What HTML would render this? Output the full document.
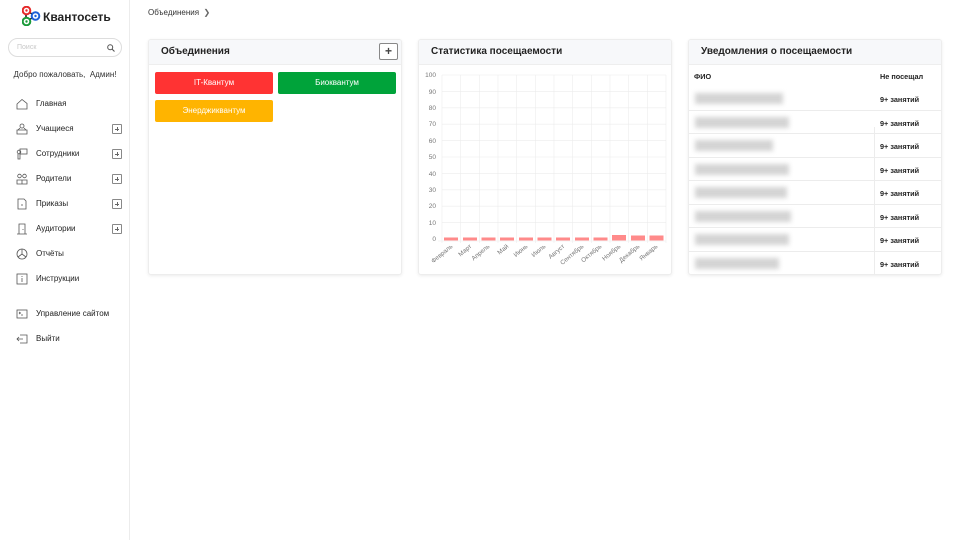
<!DOCTYPE html>
<html><head><meta charset="utf-8"><style>
*{box-sizing:border-box;margin:0;padding:0}
body{width:960px;height:540px;background:#fff;font-family:"Liberation Sans","Noto Sans CJK SC",sans-serif;color:#222;position:relative;overflow:hidden}
.sb{position:absolute;left:0;top:0;width:130px;height:540px;border-right:1px solid #ececec}
.logo{position:absolute;left:22px;top:6px}
.logo span{position:absolute;left:21px;top:4px;font-weight:bold;font-size:12px;white-space:nowrap}
.search{position:absolute;left:8px;top:38px;width:114px;height:19px;border:1px solid #ddd;border-radius:10px;font-size:7px;color:#c8c8c8;padding:5px 0 0 8px}
.welcome{position:absolute;left:0;width:130px;top:70px;text-align:center;font-size:8px;color:#333}
.it{position:absolute;left:16px;font-size:8px;color:#222;height:12px;line-height:12px}
.it svg{position:absolute;left:0;top:0}
.it span{position:absolute;left:20px;white-space:nowrap}
.pl{position:absolute;left:112px;width:10px;height:10px;border:1px solid #888;border-radius:1px}
.pl:before{content:"";position:absolute;left:2px;top:4px;width:4px;height:1px;background:#666}
.pl:after{content:"";position:absolute;left:4px;top:2px;width:1px;height:4px;background:#666}
.bc{position:absolute;left:148px;top:8px;font-size:8px;color:#333}
.card{position:absolute;top:39px;width:254px;height:236px;border:1px solid #ededed;border-radius:3px;box-shadow:0 1px 3px rgba(0,0,0,.08);background:#fff;overflow:hidden}
.hd{height:25px;background:#f7f8fa;border-bottom:1px solid #eee;font-weight:bold;font-size:10px;padding:6px 0 0 12px}
.btn{position:absolute;width:118px;height:22px;border-radius:2px;color:#fff;font-size:8px;text-align:center;line-height:22px}
.addb{position:absolute;right:3px;top:3px;width:19px;height:17px;border:1px solid #888;border-radius:2px;background:#fff;font-size:12px;text-align:center;line-height:14px;color:#444;font-weight:bold}
.row{position:absolute;left:0;width:254px;height:23.5px;border-bottom:1px solid #ececec}
.nm{position:absolute;left:6px;top:6px;height:11px;background:#d4d4d4;filter:blur(2.5px)}
.v{position:absolute;left:191px;top:8px;font-size:7.3px;font-weight:bold}
.vl{position:absolute;left:185px;top:87px;width:1px;height:148px;background:#ececec}
</style></head><body>
<div class="sb">
 <div class="logo">
  <svg width="20" height="20" viewBox="0 0 20 20"><line x1="4" y1="4" x2="13" y2="10" stroke="#111" stroke-width="1.5"/><line x1="4" y1="16" x2="13" y2="10" stroke="#111" stroke-width="1.5"/><line x1="4" y1="4" x2="4" y2="16" stroke="#111" stroke-width="1.5"/>
  <circle cx="4.5" cy="4.5" r="3.8" fill="#fff" stroke="#e52a2a" stroke-width="2"/><circle cx="4.5" cy="4.5" r="1.2" fill="#e52a2a"/>
  <circle cx="13.5" cy="10" r="3.8" fill="#fff" stroke="#1c60d8" stroke-width="2"/><circle cx="13.5" cy="10" r="1.2" fill="#1c60d8"/>
  <circle cx="4.5" cy="15.5" r="3.8" fill="#fff" stroke="#1a9a3a" stroke-width="2"/><circle cx="4.5" cy="15.5" r="1.2" fill="#1a9a3a"/></svg>
  <span>Квантосеть</span>
 </div>
 <div class="search">Поиск<svg style="position:absolute;right:6px;top:5px" width="8" height="8" viewBox="0 0 8 8"><circle cx="3.2" cy="3.2" r="2.5" fill="none" stroke="#555" stroke-width="1"/><line x1="5" y1="5" x2="7.5" y2="7.5" stroke="#555" stroke-width="1.1"/></svg></div>
 <div class="welcome">Добро пожаловать,&nbsp; Админ!</div>
 <div class="it" style="top:98px"><svg width="12" height="12" viewBox="0 0 12 12" fill="none" stroke="#555" stroke-width=".8"><path d="M1 6 6 1.5 11 5.5V11H1Z"/></svg><span>Главная</span></div>
 <div class="it" style="top:123px"><svg width="12" height="12" viewBox="0 0 12 12" fill="none" stroke="#555" stroke-width=".8"><circle cx="6" cy="3" r="2"/><path d="M1 7h10v4H1zM4 5l-2 2M8 5l2 2"/></svg><span>Учащиеся</span></div>
 <div class="pl" style="top:124px"></div>
 <div class="it" style="top:148px"><svg width="12" height="12" viewBox="0 0 12 12" fill="none" stroke="#555" stroke-width=".8"><rect x="4" y="1" width="7" height="5"/><circle cx="3" cy="4" r="1.8"/><path d="M2 6v5h2V6"/></svg><span>Сотрудники</span></div>
 <div class="pl" style="top:149px"></div>
 <div class="it" style="top:173px"><svg width="12" height="12" viewBox="0 0 12 12" fill="none" stroke="#555" stroke-width=".8"><circle cx="3.5" cy="3" r="1.8"/><circle cx="8.5" cy="3" r="1.8"/><path d="M1 11V7h5v4zM6 11V7h5v4z"/></svg><span>Родители</span></div>
 <div class="pl" style="top:174px"></div>
 <div class="it" style="top:198px"><svg width="12" height="12" viewBox="0 0 12 12" fill="none" stroke="#555" stroke-width=".8"><path d="M2 1h6l2 2v8H2z"/><path d="M5 7h2"/></svg><span>Приказы</span></div>
 <div class="pl" style="top:199px"></div>
 <div class="it" style="top:223px"><svg width="12" height="12" viewBox="0 0 12 12" fill="none" stroke="#555" stroke-width=".8"><path d="M3 11V1h6v10M1 11h10M7 6v1"/></svg><span>Аудитории</span></div>
 <div class="pl" style="top:224px"></div>
 <div class="it" style="top:248px"><svg width="12" height="12" viewBox="0 0 12 12" fill="none" stroke="#555" stroke-width=".8"><circle cx="6" cy="6" r="5"/><path d="M6 1v5l4 3M6 6 2 9"/></svg><span>Отчёты</span></div>
 <div class="it" style="top:273px"><svg width="12" height="12" viewBox="0 0 12 12" fill="none" stroke="#555" stroke-width=".8"><rect x="1" y="1" width="10" height="10"/><path d="M6 3v1M6 5v4"/></svg><span>Инструкции</span></div>
 <div class="it" style="top:308px"><svg width="12" height="12" viewBox="0 0 12 12" fill="none" stroke="#555" stroke-width=".8"><rect x="1" y="2" width="10" height="8"/><path d="M3 4l1.5 1L3 6M5 7h2"/></svg><span>Управление сайтом</span></div>
 <div class="it" style="top:333px"><svg width="12" height="12" viewBox="0 0 12 12" fill="none" stroke="#555" stroke-width=".8"><path d="M4 2h7v8H4M7 6H1M3 4 1 6l2 2"/></svg><span>Выйти</span></div>
</div>
<div class="bc">Объединения &nbsp;<span style="color:#666">❯</span></div>

<div class="card" style="left:148px">
 <div class="hd">Объединения</div><div class="addb">+</div>
 <div class="btn" style="left:6px;top:32px;background:#ff3333">IT-Квантум</div>
 <div class="btn" style="left:129px;top:32px;background:#00a33a">Биоквантум</div>
 <div class="btn" style="left:6px;top:60px;background:#ffb400">Энерджиквантум</div>
</div>

<div class="card" style="left:418px">
 <div class="hd">Статистика посещаемости</div>
 <svg style="position:absolute;left:-1px;top:-1px" width="254" height="236" viewBox="418 39 254 236" font-family="Liberation Sans" font-size="6.5" fill="#777">
  <g stroke="#ececec" stroke-width=".6">
   <line x1="442" y1="75" x2="666" y2="75"/><line x1="442" y1="91.4" x2="666" y2="91.4"/><line x1="442" y1="107.8" x2="666" y2="107.8"/><line x1="442" y1="124.2" x2="666" y2="124.2"/><line x1="442" y1="140.6" x2="666" y2="140.6"/><line x1="442" y1="157" x2="666" y2="157"/><line x1="442" y1="173.4" x2="666" y2="173.4"/><line x1="442" y1="189.8" x2="666" y2="189.8"/><line x1="442" y1="206.2" x2="666" y2="206.2"/><line x1="442" y1="222.6" x2="666" y2="222.6"/><line x1="438" y1="241" x2="666" y2="241"/>
   <line x1="442" y1="75" x2="442" y2="243"/><line x1="460.7" y1="75" x2="460.7" y2="243"/><line x1="479.3" y1="75" x2="479.3" y2="243"/><line x1="498" y1="75" x2="498" y2="243"/><line x1="516.7" y1="75" x2="516.7" y2="243"/><line x1="535.3" y1="75" x2="535.3" y2="243"/><line x1="554" y1="75" x2="554" y2="243"/><line x1="572.7" y1="75" x2="572.7" y2="243"/><line x1="591.3" y1="75" x2="591.3" y2="243"/><line x1="610" y1="75" x2="610" y2="243"/><line x1="628.7" y1="75" x2="628.7" y2="243"/><line x1="647.3" y1="75" x2="647.3" y2="243"/><line x1="666" y1="75" x2="666" y2="243"/>
  </g>
  <g text-anchor="end"><text x="436" y="77">100</text><text x="436" y="94">90</text><text x="436" y="110">80</text><text x="436" y="126">70</text><text x="436" y="143">60</text><text x="436" y="159">50</text><text x="436" y="176">40</text><text x="436" y="192">30</text><text x="436" y="208">20</text><text x="436" y="225">10</text><text x="436" y="241">0</text></g>
  <g fill="#ff8a8a"><rect x="444" y="237.5" width="14" height="3"/><rect x="463" y="237.5" width="14" height="3"/><rect x="481.5" y="237.5" width="14" height="3"/><rect x="500" y="237.5" width="14" height="3"/><rect x="519" y="237.5" width="14" height="3"/><rect x="537.5" y="237.5" width="14" height="3"/><rect x="556" y="237.5" width="14" height="3"/><rect x="575" y="237.5" width="14" height="3"/><rect x="593.5" y="237.5" width="14" height="3"/><rect x="612" y="235" width="14" height="5.5"/><rect x="631" y="235.5" width="14" height="5"/><rect x="649.5" y="235.5" width="14" height="5"/></g>
  <g text-anchor="end" font-size="6.3">
   <text transform="translate(453,247) rotate(-40)">Февраль</text><text transform="translate(472,247) rotate(-40)">Март</text><text transform="translate(490,247) rotate(-40)">Апрель</text><text transform="translate(509,247) rotate(-40)">Май</text><text transform="translate(528,247) rotate(-40)">Июнь</text><text transform="translate(546,247) rotate(-40)">Июль</text><text transform="translate(565,247) rotate(-40)">Август</text><text transform="translate(584,247) rotate(-40)">Сентябрь</text><text transform="translate(602,247) rotate(-40)">Октябрь</text><text transform="translate(621,247) rotate(-40)">Ноябрь</text><text transform="translate(640,247) rotate(-40)">Декабрь</text><text transform="translate(658,247) rotate(-40)">Январь</text>
  </g>
 </svg>
</div>

<div class="card" style="left:688px">
 <div class="hd">Уведомления о посещаемости</div>
 <div style="position:absolute;left:5px;top:32px;font-size:7.3px;font-weight:bold">ФИО</div>
 <div style="position:absolute;left:191px;top:32px;font-size:7.3px;font-weight:bold">Не посещал</div>
 <div class="vl"></div>
 <div class="row" style="top:47px"><div class="nm" style="width:88px"></div><div class="v">9+ занятий</div></div>
 <div class="row" style="top:70.5px"><div class="nm" style="width:94px"></div><div class="v">9+ занятий</div></div>
 <div class="row" style="top:94px"><div class="nm" style="width:78px"></div><div class="v">9+ занятий</div></div>
 <div class="row" style="top:117.5px"><div class="nm" style="width:94px"></div><div class="v">9+ занятий</div></div>
 <div class="row" style="top:141px"><div class="nm" style="width:92px"></div><div class="v">9+ занятий</div></div>
 <div class="row" style="top:164.5px"><div class="nm" style="width:96px"></div><div class="v">9+ занятий</div></div>
 <div class="row" style="top:188px"><div class="nm" style="width:94px"></div><div class="v">9+ занятий</div></div>
 <div class="row" style="top:211.5px;border:0"><div class="nm" style="width:84px"></div><div class="v">9+ занятий</div></div>
</div>
</body></html>
